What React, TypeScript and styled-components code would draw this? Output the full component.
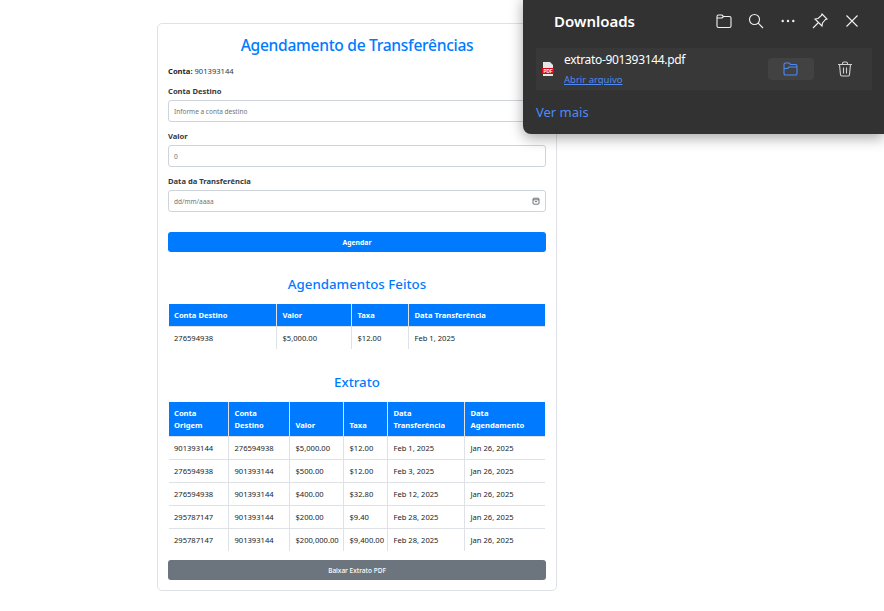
import React from "react";
import styled, { createGlobalStyle } from "styled-components";

const GlobalStyle = createGlobalStyle`
  html, body {
    margin: 0;
    padding: 0;
    background: #fff;
    font-family: "Noto Sans", "Open Sans", sans-serif;
  }
`;

const Page = styled.div`
  width: 884px;
  height: 611px;
  overflow: hidden;
  position: relative;
  box-sizing: border-box;
  padding: 23px 0 0 157px;
`;

const Card = styled.div`
  width: 400px;
  height: 568px;
  box-sizing: border-box;
  border: 1px solid #dee2e6;
  border-radius: 5px;
  padding: 9px 10px 0;
  color: #212529;
`;

const Title = styled.h2`
  margin: 0;
  height: 24px;
  line-height: 24px;
  font-size: 15.6px;
  letter-spacing: -0.3px;
  font-weight: 500;
  text-align: center;
  color: #007bff;
`;

const Subtitle = styled.h3<{ $top: number }>`
  margin: ${(p) => p.$top}px 0 10px;
  height: 20px;
  line-height: 20px;
  font-size: 13.3px;
  font-weight: 500;
  text-align: center;
  color: #007bff;
`;

const AccountLine = styled.p`
  margin: 7px 0 0;
  height: 14px;
  line-height: 14px;
  font-size: 7.6px;
  color: #343a40;

  strong {
    font-weight: 700;
    color: #212529;
  }
`;

const Label = styled.label`
  display: block;
  margin-top: 6px;
  height: 14px;
  line-height: 14px;
  font-size: 7.6px;
  font-weight: 700;
  color: #343a40;
`;

const FieldBox = styled.div`
  margin-top: 2px;
  margin-bottom: 7px;
  height: 22px;
  box-sizing: border-box;
  border: 1px solid #ced4da;
  border-radius: 3px;
  padding: 0 5px;
  display: flex;
  align-items: center;
  justify-content: space-between;
  font-size: 6.5px;
  color: #6c757d;
`;

const CalendarIcon = styled.svg`
  width: 8px;
  height: 8px;
  color: #495057;
`;

const SolidButton = styled.div<{ $bg: string; $top: number; $weight: number; $size: number }>`
  margin-top: ${(p) => p.$top}px;
  height: 20px;
  line-height: 21px;
  border-radius: 3px;
  background: ${(p) => p.$bg};
  color: #fff;
  font-size: ${(p) => p.$size}px;
  font-weight: ${(p) => p.$weight};
  text-align: center;
`;

const Table = styled.table`
  border-collapse: collapse;
  table-layout: fixed;
  width: 376px;
  margin-left: 1px;
  font-size: 7.6px;
`;

const Col = styled.col<{ $w: number }>`
  width: ${(p) => p.$w}px;
`;

const Th = styled.th`
  background: #007bff;
  color: #fff;
  font-weight: 700;
  text-align: left;
  vertical-align: bottom;
  padding: 5px 4px 5px 6px;
  line-height: 12px;
  border-left: 1px solid #dee2e6;

  &:first-child {
    border-left: none;
    padding-left: 5px;
  }
`;

const Td = styled.td`
  padding: 0 0 0 6px;
  height: 22px;
  color: #212529;
  white-space: nowrap;
  border-left: 1px solid #dee2e6;
  border-top: 1px solid #dee2e6;

  &:first-child {
    border-left: none;
    padding-left: 5px;
  }
`;

const Panel = styled.div`
  position: absolute;
  top: -4px;
  right: 0;
  width: 361px;
  height: 138px;
  box-sizing: border-box;
  padding: 4px 12px 0 13px;
  background: #323232;
  border-radius: 0 0 0 8px;
  box-shadow: 0 4px 14px rgba(0, 0, 0, 0.35);
  color: #fff;
`;

const PanelHeader = styled.div`
  height: 42px;
  display: flex;
  align-items: center;
  justify-content: space-between;
  padding: 0 12px 0 18px;
`;

const PanelTitle = styled.span`
  font-size: 15px;
  font-weight: 600;
`;

const PanelTools = styled.div`
  display: flex;
  align-items: center;
  gap: 16px;
`;

const ToolIcon = styled.svg<{ $stroke?: string }>`
  width: 16px;
  height: 16px;
  fill: none;
  stroke: ${(p) => p.$stroke ?? "#f2f2f2"};
  stroke-width: 1.1;
  display: block;
`;

const DownloadRow = styled.div`
  height: 42px;
  margin-top: 6px;
  background: #383838;
  display: flex;
  align-items: center;
  padding-left: 6px;
`;

const FileInfo = styled.div`
  margin-left: 10px;
  width: 204px;
`;

const FileName = styled.div`
  font-size: 12px;
  letter-spacing: -0.33px;
  line-height: 16px;
  color: #fff;
`;

const OpenLink = styled.a`
  display: block;
  margin-top: 5px;
  font-size: 9.5px;
  line-height: 13px;
  color: #4d8bf5;
  text-decoration: underline;
`;

const FolderButton = styled.div`
  width: 46px;
  height: 22px;
  border-radius: 4px;
  background: #424242;
  display: flex;
  align-items: center;
  justify-content: center;
`;

const TrashSlot = styled.div`
  margin-left: 23px;
`;

const MoreLink = styled.a`
  display: block;
  margin-top: 13px;
  font-size: 13px;
  line-height: 18px;
  color: #4d8bf5;
`;

const PdfIcon = () => (
  <svg width="12" height="15" viewBox="0 0 12 15">
    <path d="M1 0h7l3 3v11H1z" fill="#e6e6e6" />
    <rect x="0" y="6" width="12" height="6" fill="#d4071c" />
    <text x="6" y="11" fontSize="4.6" fontWeight="700" fill="#fff" textAnchor="middle" fontFamily="Liberation Sans, sans-serif">
      PDF
    </text>
  </svg>
);

const agendamentoCols = [107, 75, 57, 137];
const extratoCols = [59, 61, 54, 44, 77, 81];

const agendamentoHead = ["Conta Destino", "Valor", "Taxa", "Data Transferência"];
const agendamentoRows = [["276594938", "$5,000.00", "$12.00", "Feb 1, 2025"]];

const extratoHead = ["Conta Origem", "Conta Destino", "Valor", "Taxa", "Data Transferência", "Data Agendamento"];
const extratoRows = [
  ["901393144", "276594938", "$5,000.00", "$12.00", "Feb 1, 2025", "Jan 26, 2025"],
  ["276594938", "901393144", "$500.00", "$12.00", "Feb 3, 2025", "Jan 26, 2025"],
  ["276594938", "901393144", "$400.00", "$32.80", "Feb 12, 2025", "Jan 26, 2025"],
  ["295787147", "901393144", "$200.00", "$9.40", "Feb 28, 2025", "Jan 26, 2025"],
  ["295787147", "901393144", "$200,000.00", "$9,400.00", "Feb 28, 2025", "Jan 26, 2025"],
];

const DataTable = ({ cols, head, rows }: { cols: number[]; head: string[]; rows: string[][] }) => (
  <Table>
    <colgroup>
      {cols.map((w, i) => (
        <Col key={i} $w={w} />
      ))}
    </colgroup>
    <thead>
      <tr>
        {head.map((h) => (
          <Th key={h}>{h}</Th>
        ))}
      </tr>
    </thead>
    <tbody>
      {rows.map((row, i) => (
        <tr key={i}>
          {row.map((c, j) => (
            <Td key={j}>{c}</Td>
          ))}
        </tr>
      ))}
    </tbody>
  </Table>
);

const App = () => (
  <Page>
    <GlobalStyle />
    <Card>
      <Title>Agendamento de Transferências</Title>
      <AccountLine>
        <strong>Conta:</strong> 901393144
      </AccountLine>
      <Label>Conta Destino</Label>
      <FieldBox>Informe a conta destino</FieldBox>
      <Label>Valor</Label>
      <FieldBox>0</FieldBox>
      <Label>Data da Transferência</Label>
      <FieldBox>
        dd/mm/aaaa
        <CalendarIcon viewBox="0 0 8 8" fill="none" stroke="currentColor" strokeWidth="0.8">
          <rect x="1" y="1.2" width="6" height="6" rx="1" />
          <path d="M1 2.8h6M3 4.6h2" />
        </CalendarIcon>
      </FieldBox>
      <SolidButton $bg="#007bff" $top={20} $weight={700} $size={6.8}>
        Agendar
      </SolidButton>
      <Subtitle $top={22}>Agendamentos Feitos</Subtitle>
      <DataTable cols={agendamentoCols} head={agendamentoHead} rows={agendamentoRows} />
      <Subtitle $top={23}>Extrato</Subtitle>
      <DataTable cols={extratoCols} head={extratoHead} rows={extratoRows} />
      <SolidButton $bg="#6c757d" $top={9} $weight={500} $size={6.5}>
        Baixar Extrato PDF
      </SolidButton>
    </Card>
    <Panel>
      <PanelHeader>
        <PanelTitle>Downloads</PanelTitle>
        <PanelTools>
          <ToolIcon viewBox="0 0 16 16">
            <path d="M1 4.5V13a1.5 1.5 0 0 0 1.5 1.5h11A1.5 1.5 0 0 0 15 13V5a1.5 1.5 0 0 0-1.5-1.5H7.5L6 2H2.5A1.5 1.5 0 0 0 1 3.5zM1 5h5l1.5-1.5" />
          </ToolIcon>
          <ToolIcon viewBox="0 0 16 16">
            <circle cx="6.5" cy="6.5" r="5" />
            <path d="M10.2 10.2 15 15" />
          </ToolIcon>
          <ToolIcon viewBox="0 0 16 16">
            <circle cx="2.7" cy="8" r="1.2" fill="#f2f2f2" stroke="none" />
            <circle cx="8" cy="8" r="1.2" fill="#f2f2f2" stroke="none" />
            <circle cx="13.3" cy="8" r="1.2" fill="#f2f2f2" stroke="none" />
          </ToolIcon>
          <ToolIcon viewBox="0 0 16 16">
            <path d="M10 1 15 6 13.5 6.5 10.5 10 10 13 3 6 6 5.5 9.5 2.5zM6 10 1 15" />
          </ToolIcon>
          <ToolIcon viewBox="0 0 16 16">
            <path d="M2.5 2.5 13.5 13.5M13.5 2.5 2.5 13.5" />
          </ToolIcon>
        </PanelTools>
      </PanelHeader>
      <DownloadRow>
        <PdfIcon />
        <FileInfo>
          <FileName>extrato-901393144.pdf</FileName>
          <OpenLink>Abrir arquivo</OpenLink>
        </FileInfo>
        <FolderButton>
          <ToolIcon viewBox="0 0 16 16" $stroke="#4d8bf5">
            <path d="M1 12.5V3.5A1.5 1.5 0 0 1 2.5 2H6l1.5 1.5h5A1.5 1.5 0 0 1 14 5v1M1 12.5A1.5 1.5 0 0 0 2.5 14h10a1.5 1.5 0 0 0 1.5-1.5V7.5A1.5 1.5 0 0 0 13.5 6H6L4.5 7.5H1z" />
          </ToolIcon>
        </FolderButton>
        <TrashSlot>
          <ToolIcon viewBox="0 0 16 16" $stroke="#d0d0d0">
            <path d="M1 3.5h14M5.5 3.5V2.5A1.5 1.5 0 0 1 7 1h2a1.5 1.5 0 0 1 1.5 1.5v1M2.5 3.5l1 10A1.5 1.5 0 0 0 5 15h6a1.5 1.5 0 0 0 1.5-1.5l1-10M6.5 6.5v6M9.5 6.5v6" />
          </ToolIcon>
        </TrashSlot>
      </DownloadRow>
      <MoreLink>Ver mais</MoreLink>
    </Panel>
  </Page>
);

export default App;
